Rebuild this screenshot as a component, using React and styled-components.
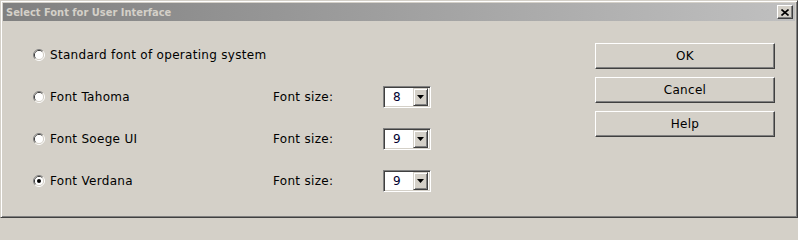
import React from "react";
import styled, { createGlobalStyle } from "styled-components";

const Global = createGlobalStyle`
  html, body { margin: 0; padding: 0; background: #d4d0c8; }
  body { width: 798px; height: 218px; overflow: hidden; }
`;

const Window = styled.div`
  box-sizing: border-box;
  width: 798px;
  height: 218px;
  background: #d4d0c8;
  border-style: solid;
  border-width: 1px;
  border-color: #d4d0c8 #404040 #404040 #d4d0c8;
  box-shadow: inset 1px 1px 0 #ffffff, inset -1px -1px 0 #808080;
  padding: 2px;
  display: flex;
  flex-direction: column;
  font-family: "DejaVu Sans", Verdana, sans-serif;
  font-size: 12px;
  letter-spacing: 0.3px;
  color: #000;
`;

const TitleBar = styled.div`
  height: 18px;
  flex: none;
  display: flex;
  align-items: center;
  justify-content: space-between;
  padding: 0 2px 0 3px;
  background: linear-gradient(to right, #808080, #c0c0c0);
`;

const Title = styled.span`
  font-family: "DejaVu Sans Condensed", "DejaVu Sans", sans-serif;
  font-stretch: condensed;
  font-weight: bold;
  font-size: 11px;
  letter-spacing: 0;
  color: #d4d0c8;
`;

const CloseButton = styled.div`
  box-sizing: border-box;
  width: 16px;
  height: 14px;
  background: #d4d0c8;
  border-style: solid;
  border-width: 1px;
  border-color: #ffffff #404040 #404040 #ffffff;
  box-shadow: inset -1px -1px 0 #808080;
  display: flex;
  align-items: center;
  justify-content: center;
`;

const Body = styled.div`
  flex: 1;
  display: flex;
  padding: 0 20px 0 30px;
`;

const Options = styled.div`
  display: grid;
  grid-template-columns: 240px 110px 48px;
  grid-auto-rows: 42px;
  align-items: center;
  padding-top: 13px;
`;

const RadioLabel = styled.label`
  display: flex;
  align-items: center;
  gap: 5px;
  white-space: nowrap;
`;

const SizeLabel = styled.span`
  white-space: nowrap;
`;

const Combo = styled.div`
  box-sizing: border-box;
  width: 48px;
  height: 22px;
  background: #fff;
  border-style: solid;
  border-width: 1px;
  border-color: #808080 #ffffff #ffffff #808080;
  box-shadow: inset 1px 1px 0 #404040, inset -1px -1px 0 #d4d0c8;
  display: flex;
  align-items: center;
  justify-content: space-between;
  padding: 2px;
`;

const ComboValue = styled.span`
  padding-left: 7px;
  color: #000030;
`;

const DropButton = styled.div`
  box-sizing: border-box;
  width: 15px;
  height: 18px;
  background: #d4d0c8;
  border-style: solid;
  border-width: 1px;
  border-color: #d4d0c8 #404040 #404040 #d4d0c8;
  box-shadow: inset 1px 1px 0 #ffffff, inset -1px -1px 0 #808080;
  display: flex;
  align-items: center;
  justify-content: center;
`;

const Buttons = styled.div`
  margin-left: auto;
  padding-top: 22px;
  display: flex;
  flex-direction: column;
  gap: 8px;
`;

const Button = styled.button`
  box-sizing: border-box;
  width: 180px;
  height: 26px;
  margin: 0;
  padding: 0;
  background: #d4d0c8;
  font-family: "DejaVu Sans", Verdana, sans-serif;
  font-size: 12px;
  letter-spacing: 0.3px;
  color: #000;
  border-style: solid;
  border-width: 1px;
  border-color: #ffffff #404040 #404040 #ffffff;
  box-shadow: inset -1px -1px 0 #808080;
  outline: none;
`;

function Radio({ checked }) {
  return (
    <svg width="12" height="12" viewBox="0 0 12 12">
      <path d="M2.11 9.89 A5.5 5.5 0 0 1 9.89 2.11" fill="none" stroke="#808080" strokeWidth="1" />
      <path d="M9.89 2.11 A5.5 5.5 0 0 1 2.11 9.89" fill="none" stroke="#ffffff" strokeWidth="1" />
      <path d="M2.82 9.18 A4.5 4.5 0 0 1 9.18 2.82" fill="none" stroke="#404040" strokeWidth="1" />
      <path d="M9.18 2.82 A4.5 4.5 0 0 1 2.82 9.18" fill="none" stroke="#d4d0c8" strokeWidth="1" />
      <circle cx="6" cy="6" r="4" fill="#ffffff" />
      {checked && <circle cx="6" cy="6" r="2" fill="#000000" />}
    </svg>
  );
}

function Arrow() {
  return (
    <svg width="7" height="4" viewBox="0 0 7 4">
      <path d="M0 0 H7 L3.5 4 Z" fill="#000" />
    </svg>
  );
}

function CloseX() {
  return (
    <svg width="8" height="7" viewBox="0 0 8 7">
      <path d="M0.5 0.5 L7.5 6.5 M7.5 0.5 L0.5 6.5" stroke="#000" strokeWidth="1.6" />
    </svg>
  );
}

const rows = [
  { label: "Standard font of operating system", checked: false },
  { label: "Font Tahoma", size: "8", checked: false },
  { label: "Font Soege UI", size: "9", checked: false },
  { label: "Font Verdana", size: "9", checked: true },
];

export default function App() {
  return (
    <>
      <Global />
      <Window>
        <TitleBar>
          <Title>Select Font for User Interface</Title>
          <CloseButton>
            <CloseX />
          </CloseButton>
        </TitleBar>
        <Body>
          <Options>
            {rows.map((r) => (
              <React.Fragment key={r.label}>
                <RadioLabel>
                  <Radio checked={r.checked} />
                  {r.label}
                </RadioLabel>
                {r.size ? (
                  <>
                    <SizeLabel>Font size:</SizeLabel>
                    <Combo>
                      <ComboValue>{r.size}</ComboValue>
                      <DropButton>
                        <Arrow />
                      </DropButton>
                    </Combo>
                  </>
                ) : (
                  <>
                    <span />
                    <span />
                  </>
                )}
              </React.Fragment>
            ))}
          </Options>
          <Buttons>
            <Button>OK</Button>
            <Button>Cancel</Button>
            <Button>Help</Button>
          </Buttons>
        </Body>
      </Window>
    </>
  );
}
